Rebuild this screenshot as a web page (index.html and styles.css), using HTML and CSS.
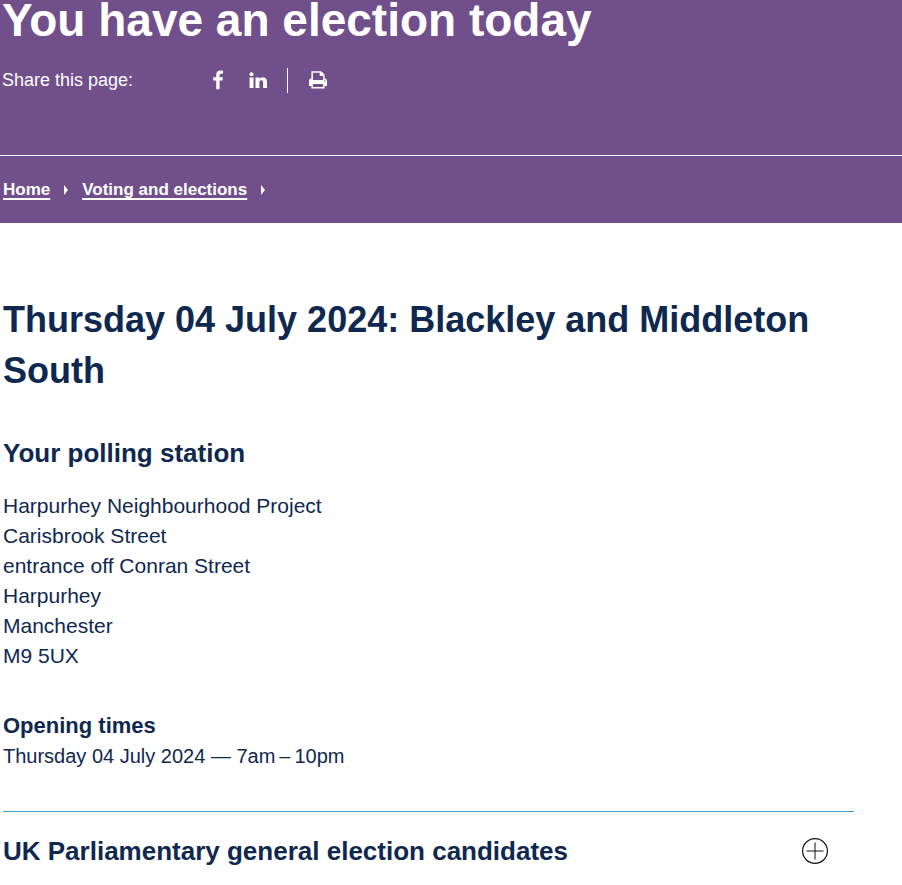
FILE: index.html
```html
<!DOCTYPE html>
<html lang="en">
<head>
    <meta charset="UTF-8">
    <meta name="viewport" content="width=device-width, initial-scale=1.0">
    <title>You have an election today</title>
    <link rel="stylesheet" href="styles.css">
</head>
<body>
    <header class="hero">
        <h1>You have an election today</h1>
        <div class="share">
            <span class="share-label">Share this page:</span>
            <a href="#" class="share-link" aria-label="Share on Facebook">
                <svg width="20" height="20" viewBox="0 0 20 20" fill="#fff"><path d="M15 .6v3.100h-1.800c-1.300 0-1.600.6-1.600 1.600v2h3.300l-.4 3.300h-2.900V19.300H8.200v-8.700H5.200V7.300h3V4.800C8.200 1.900 10 .400 12.600.400c1.200 0 2.100.1 2.400.2z"/></svg>
            </a>
            <a href="#" class="share-link" aria-label="Share on LinkedIn">
                <svg width="20" height="20" viewBox="0 0 20 20" fill="#fff"><path d="M1.600 7.500h3.900V18H1.600z"/><circle cx="3.500" cy="4.200" r="2"/><path d="M7.500 7.500h3.700v1.500c.6-1 1.700-1.800 3.500-1.800 2.700 0 4.300 1.700 4.300 4.900V18h-3.900v-5.500c0-1.400-.5-2.300-1.700-2.300-1.300 0-2 .9-2 2.300V18H7.500z"/></svg>
            </a>
            <span class="share-divider"></span>
            <button type="button" class="print" aria-label="Print this page" onclick="window.print()">
                <svg width="20" height="20" viewBox="0 0 20 20"><path fill="#fff" fill-rule="evenodd" d="M3.400 1.200h9.800l3.400 3.400V8.400c1.500.1 2.400 1 2.400 2.500v5h-2.400v2.700H3.400v-2.700H1v-5c0-1.500.9-2.400 2.400-2.500zM4.900 2.700v7.300h10.200V6h-3.400V2.700zM4.900 14v3.100h10.200V14zM17 10.200a.7.7 0 1 0 0 1.400.7.7 0 0 0 0-1.400z"/></svg>
            </button>
        </div>
        <nav class="breadcrumb" aria-label="Breadcrumb">
            <a href="#">Home</a>
            <span class="arrow"></span>
            <a href="#">Voting and elections</a>
            <span class="arrow"></span>
        </nav>
    </header>
    <main class="content">
        <h2>Thursday 04 July 2024: Blackley and Middleton South</h2>
        <h3>Your polling station</h3>
        <address>
            Harpurhey Neighbourhood Project<br>
            Carisbrook Street<br>
            entrance off Conran Street<br>
            Harpurhey<br>
            Manchester<br>
            M9 5UX
        </address>
        <h4>Opening times</h4>
        <p>Thursday 04 July 2024 — 7am&#8201;–&#8201;10pm</p>
        <details class="candidates">
            <summary>
                <span>UK Parliamentary general election candidates</span>
                <svg width="26" height="26" viewBox="0 0 26 26" fill="none" stroke="#111"><circle cx="13" cy="13" r="12.400" stroke-width="1.200"/><path d="M4.500 13h17M13 4.500v17"/></svg>
            </summary>
        </details>
    </main>
</body>
</html>
```
FILE: styles.css
```css
body {
    margin: 0;
    font-family: "Liberation Sans", Arial, sans-serif;
    font-size: 20px;
    line-height: 30px;
    color: #0f2850;
    background-color: white;
}
h1, h2, h3, h4, p {
    margin: 0;
}
.hero {
    background-color: #714f8a;
    color: white;
}
h1 {
    padding-left: 2px;
    font-size: 46px;
    line-height: 40px;
}
.share {
    display: flex;
    align-items: center;
    height: 80px;
    padding: 0 2px 35px;
    font-size: 18px;
}
.share-label {
    width: 206px;
}
.share-link {
    display: flex;
    margin-right: 20px;
}
.share-link + .share-divider {
    margin-left: -1px;
}
.share-divider {
    width: 1px;
    height: 25px;
    margin-right: 20px;
    background-color: white;
}
.print {
    display: flex;
    padding: 0;
    border: none;
    background: none;
    cursor: pointer;
}
.breadcrumb {
    display: flex;
    align-items: center;
    padding: 19px 3px 18px;
    border-top: 1px solid white;
    font-size: 17px;
    font-weight: bold;
}
.breadcrumb a {
    color: white;
    text-decoration: underline;
    text-decoration-thickness: 2px;
    text-decoration-skip-ink: none;
    text-underline-offset: 3px;
}
.arrow {
    margin: 0 14px;
    border-left: 4px solid white;
    border-top: 5px solid transparent;
    border-bottom: 5px solid transparent;
}
.content {
    padding: 71px 48px 0 3px;
}
h2 {
    margin-bottom: 42px;
    font-size: 36px;
    line-height: 51px;
}
h3 {
    margin-bottom: 23px;
    font-size: 26px;
}
address {
    margin-bottom: 40px;
    font-size: 21px;
    font-style: normal;
}
h4 {
    font-size: 22px;
}
.candidates {
    margin-top: 40px;
    border-top: 1px solid #35a6c4;
}
.candidates summary {
    display: flex;
    justify-content: space-between;
    align-items: center;
    padding: 24px 26px 19px 0;
    font-size: 26px;
    font-weight: bold;
    list-style: none;
    cursor: pointer;
}
```
